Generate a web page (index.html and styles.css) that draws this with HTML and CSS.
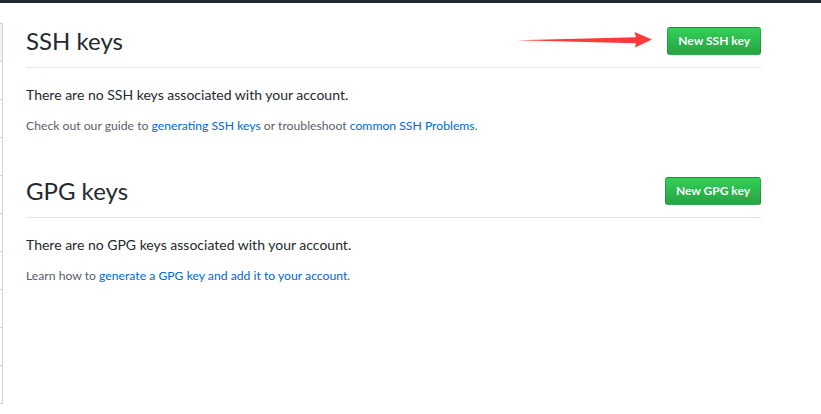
FILE: index.html
```html
<!DOCTYPE html>
<html>
<head>
<meta charset="utf-8">
<link rel="stylesheet" href="styles.css">
</head>
<body>
<div class="topbar"></div>
<div class="layout">
  <nav class="sidebar">
    <div class="item selected"></div>
    <div class="item"></div>
    <div class="item"></div>
    <div class="item"></div>
    <div class="item"></div>
    <div class="item"></div>
    <div class="item"></div>
    <div class="item"></div>
    <div class="item"></div>
    <div class="item"></div>
  </nav>
  <main class="main">
    <section class="section">
      <div class="subhead">
        <h2 class="subhead-title">SSH keys</h2>
        <a class="btn" href="#">New SSH key</a>
      </div>
      <p class="blank">There are no SSH keys associated with your account.</p>
      <p class="note">Check out our guide to <a href="#">generating SSH keys</a> or troubleshoot <a href="#">common SSH Problems</a>.</p>
    </section>
    <section class="section second">
      <div class="subhead">
        <h2 class="subhead-title">GPG keys</h2>
        <a class="btn" href="#">New GPG key</a>
      </div>
      <p class="blank">There are no GPG keys associated with your account.</p>
      <p class="note">Learn how to <a href="#">generate a GPG key and add it to your account</a>.</p>
    </section>
  </main>
</div>
<svg class="arrow" width="821" height="80" viewBox="0 0 821 80">
  <polygon points="517,40.3 636,37.2 634.5,32 652,39.6 635,47.5 636,43.2" fill="#fb3a3a"/>
</svg>
</body>
</html>
```

FILE: styles.css
```css
html, body {
  margin: 0;
  padding: 0;
  background: #fff;
}
body {
  font-family: Lato, "Open Sans", "Liberation Sans", sans-serif;
  color: #24292e;
  font-size: 14px;
  line-height: 1.5;
  position: relative;
  height: 414px;
  overflow: hidden;
}
.topbar {
  height: 3px;
  background: #24292e;
}
.layout {
  display: flex;
  align-items: flex-start;
}
.sidebar {
  width: 2px;
  margin-top: 20px;
  border-right: 1px solid #d1d5da;
  border-top: 1px solid #d1d5da;
  flex: none;
}
.sidebar .item {
  height: 37px;
  border-bottom: 1px solid #d1d5da;
}
.sidebar .item.selected {
  background: #eef1f8;
}
.main {
  width: 735px;
  margin-left: 23px;
  padding-top: 23px;
}
.subhead {
  display: flex;
  align-items: center;
  justify-content: space-between;
  padding-bottom: 11px;
  border-bottom: 1px solid #e1e4e8;
}
.subhead-title {
  margin: 0;
  font-size: 24px;
  font-weight: 400;
  line-height: 30px;
}
.btn {
  display: inline-block;
  padding: 3px 10px;
  font-size: 12px;
  line-height: 20px;
  font-weight: 700;
  color: #fff;
  text-decoration: none;
  background-image: linear-gradient(-180deg, #34d058 0%, #28a745 90%);
  border: 1px solid rgba(27, 31, 35, 0.2);
  border-radius: 3px;
  text-shadow: 0 0 1px rgba(0,0,0,0.15);
}
.blank {
  margin: 16px 0 0;
  font-size: 14px;
  line-height: 21px;
}
.note {
  margin: 12px 0 0;
  font-size: 12.2px;
  line-height: 18px;
  color: #586069;
}
.note a {
  color: #0366d6;
  text-decoration: none;
}
.second {
  margin-top: 41px;
}
.arrow {
  position: absolute;
  left: 0;
  top: 0;
}
```
